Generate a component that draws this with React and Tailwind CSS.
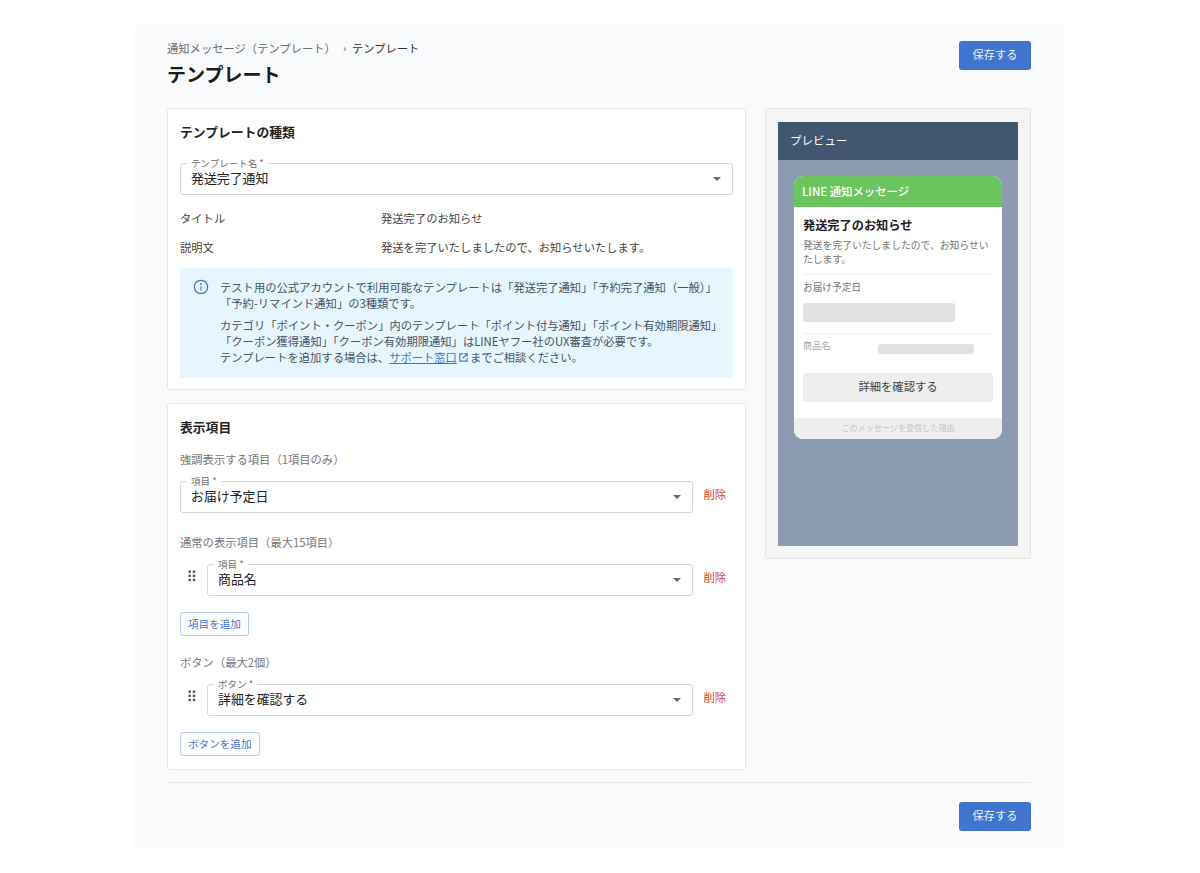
import React from "react";

const font = { fontFamily: '"Noto Sans CJK JP", "Noto Sans", sans-serif' };

function Caret() {
  return <span className="w-0 h-0 border-l-4 border-r-4 border-t-4 border-l-transparent border-r-transparent border-t-[#6b6b6b]" />;
}

function Select({ label, value }) {
  return (
    <div className="relative flex-1 h-8 border border-[#d5d7da] rounded-[3px] bg-white flex items-center justify-between pl-[10px] pr-[11px]">
      <span className="absolute left-[6px] -top-[7px] px-1 bg-white text-[9.5px] leading-[12px] text-[#6f6f6f]">{label}</span>
      <span className="text-[12.9px] leading-4 text-[#222] -mt-[3px]">{value}</span>
      <Caret />
    </div>
  );
}

function Grip() {
  return (
    <svg width="8" height="12" viewBox="0 0 8 12" className="shrink-0 fill-[#555]">
      <rect x="0.5" y="0.5" width="2.4" height="2.4" />
      <rect x="4.8" y="0.5" width="2.4" height="2.4" />
      <rect x="0.5" y="4.6" width="2.4" height="2.4" />
      <rect x="4.8" y="4.6" width="2.4" height="2.4" />
      <rect x="0.5" y="8.7" width="2.4" height="2.4" />
      <rect x="4.8" y="8.7" width="2.4" height="2.4" />
    </svg>
  );
}

function Row({ label, value, grip }) {
  return (
    <div className="flex items-center">
      {grip && (
        <div className="w-[27px] shrink-0 pl-2 -mt-2">
          <Grip />
        </div>
      )}
      <Select label={label} value={value} />
      <span className="w-[40px] shrink-0 text-right pr-[7px] text-[11.3px] text-[#d0453a] -mt-[6px]">削除</span>
    </div>
  );
}

function AddButton({ children }) {
  return (
    <button className="h-6 px-[7px] border border-[#b3c8ec] rounded-[3px] bg-white text-[10.6px] leading-none text-[#3f75cc]">
      {children}
    </button>
  );
}

function SaveButton() {
  return (
    <button className="w-[72px] h-[29px] pb-[2px] rounded-[3px] bg-[#3f75cc] text-[11.2px] leading-none text-[#e8effa]">
      保存する
    </button>
  );
}

export default function App() {
  return (
    <div className="bg-white pt-[25px] pb-[25px] h-[873px]" style={font}>
      <div className="ml-[135px] w-[929px] h-[823px] bg-[#f9fafb] pl-8 pr-[33px] pt-4">
        {/* HEADER */}
        <div className="flex justify-between items-start h-[67px]">
          <div>
            <div className="flex items-center h-4 -mt-[1px] text-[11.3px] leading-4 text-[#6b6b6b]">
              <span>通知メッセージ（テンプレート）</span>
              <span className="ml-[7px] mr-[6px] text-[10px] text-[#555]">›</span>
              <span className="text-[#333]">テンプレート</span>
            </div>
            <h1 className="mt-1 text-[19px] leading-7 font-bold text-[#1c1c1c]">テンプレート</h1>
          </div>
          <SaveButton />
        </div>

        <div className="flex gap-[19px] items-start">
          {/* LEFT */}
          <div className="w-[579px] flex flex-col gap-[13px]">
            <div className="h-[282px] border border-[#e6e7e9] rounded-[3px] bg-white px-[12px] pt-[13px]">
              <h2 className="text-[12.8px] leading-5 font-bold text-[#222]">テンプレートの種類</h2>
              <div className="mt-[21px] flex">
                <Select label="テンプレート名 *" value="発送完了通知" />
              </div>
              <div className="mt-[13px] flex h-[20px] items-center text-[11.3px] text-[#444]">
                <span className="w-[201px]">タイトル</span>
                <span>発送完了のお知らせ</span>
              </div>
              <div className="mt-[9px] flex h-[20px] items-center text-[11.3px] text-[#444]">
                <span className="w-[201px]">説明文</span>
                <span>発送を完了いたしましたので、お知らせいたします。</span>
              </div>
              {/* INFO */}
              <div className="mt-[11px] h-[110px] rounded-[3px] bg-[#e7f5fe] flex pl-[13px] pt-[11px] text-[#445467] text-[11.3px] leading-[16px]">
                <svg width="16" height="16" viewBox="0 0 24 24" fill="none" stroke="#3f75cc" strokeWidth="1.8" className="shrink-0">
                  <circle cx="12" cy="12" r="10" />
                  <path d="M12 11v6" />
                  <circle cx="12" cy="7.5" r="0.6" fill="#3f75cc" />
                </svg>
                <div className="ml-[11px] whitespace-nowrap">
                  <p>テスト用の公式アカウントで利用可能なテンプレートは「発送完了通知」「予約完了通知（一般）」<br />「予約-リマインド通知」の3種類です。</p>
                  <p className="mt-[6px]">
                    カテゴリ「ポイント・クーポン」内のテンプレート「ポイント付与通知」「ポイント有効期限通知」<br />
                    「クーポン獲得通知」「クーポン有効期限通知」はLINEヤフー社のUX審査が必要です。<br />
                    テンプレートを追加する場合は、<span className="text-[#3f75cc] underline">サポート窓口</span>
                    <svg width="11" height="11" viewBox="0 0 24 24" fill="none" stroke="#3f75cc" strokeWidth="2.4" className="inline mx-[1px] -mt-[2px]">
                      <path d="M11 4H4v16h16v-7" />
                      <path d="M14 4h6v6" />
                      <path d="M20 4 10 14" />
                    </svg>
                    までご相談ください。
                  </p>
                </div>
              </div>
            </div>

            <div className="h-[367px] border border-[#e6e7e9] rounded-[3px] bg-white px-[12px] pt-[13px]">
              <h2 className="text-[12.8px] leading-5 font-bold text-[#222]">表示項目</h2>
              <p className="mt-[14px] text-[11.3px] leading-4 text-[#777]">強調表示する項目（1項目のみ）</p>
              <div className="mt-[14px]">
                <Row label="項目 *" value="お届け予定日" />
              </div>
              <p className="mt-[21px] text-[11.3px] leading-4 text-[#777]">通常の表示項目（最大15項目）</p>
              <div className="mt-[14px]">
                <Row label="項目 *" value="商品名" grip />
              </div>
              <div className="mt-4 flex">
                <AddButton>項目を追加</AddButton>
              </div>
              <p className="mt-[18px] text-[11.3px] leading-4 text-[#777]">ボタン（最大2個）</p>
              <div className="mt-[14px]">
                <Row label="ボタン *" value="詳細を確認する" grip />
              </div>
              <div className="mt-4 flex">
                <AddButton>ボタンを追加</AddButton>
              </div>
            </div>
          </div>

          {/* PREVIEW */}
          <div className="w-[266px] h-[451px] border border-[#e4e5e5] rounded-[3px] bg-[#f5f5f5] px-3 pt-[13px]">
            <div className="h-[424px] bg-[#8b9bb2]">
              <div className="h-[38px] bg-[#42566f] flex items-center pl-3 text-[11.5px] text-white">プレビュー</div>
              <div className="mx-4 mt-4 h-[263px] rounded-[9px] overflow-hidden bg-white flex flex-col">
                <div className="h-[31px] shrink-0 bg-[#6cc45f] flex items-center pl-2 text-[11.4px] font-medium text-white">LINE 通知メッセージ</div>
                <div className="flex-1 px-[9px] pt-2">
                  <div className="text-[12.2px] leading-5 font-bold text-[#222]">発送完了のお知らせ</div>
                  <p className="mt-[3px] text-[9.8px] leading-[14px] text-[#777]">発送を完了いたしましたので、お知らせいたします。</p>
                  <div className="mt-2 border-t border-[#eee] pt-[5px] text-[9.7px] leading-[14px] text-[#777]">お届け予定日</div>
                  <div className="mt-[9px] w-[152px] h-[19px] rounded-[3px] bg-[#e2e2e2]" />
                  <div className="mt-[11px] border-t border-[#eee] pt-1 flex">
                    <span className="w-[75px] text-[9.2px] leading-[14px] text-[#aaa]">商品名</span>
                    <div className="mt-[6px] w-[96px] h-[10px] rounded-[3px] bg-[#e2e2e2]" />
                  </div>
                  <div className="mt-[19px] h-[29px] pb-[2px] rounded-[3px] bg-[#eeeeee] flex items-center justify-center text-[11.3px] text-[#444]">詳細を確認する</div>
                </div>
                <div className="h-[21px] shrink-0 bg-[#eeeeee] flex items-center justify-center text-[8.1px] text-[#c4c4c4]">このメッセージを受信した理由</div>
              </div>
            </div>
          </div>
        </div>

        {/* FOOTER */}
        <div className="mt-[12px] border-t border-[#e4e5e7] pt-[19px] flex justify-end">
          <SaveButton />
        </div>
      </div>
    </div>
  );
}
